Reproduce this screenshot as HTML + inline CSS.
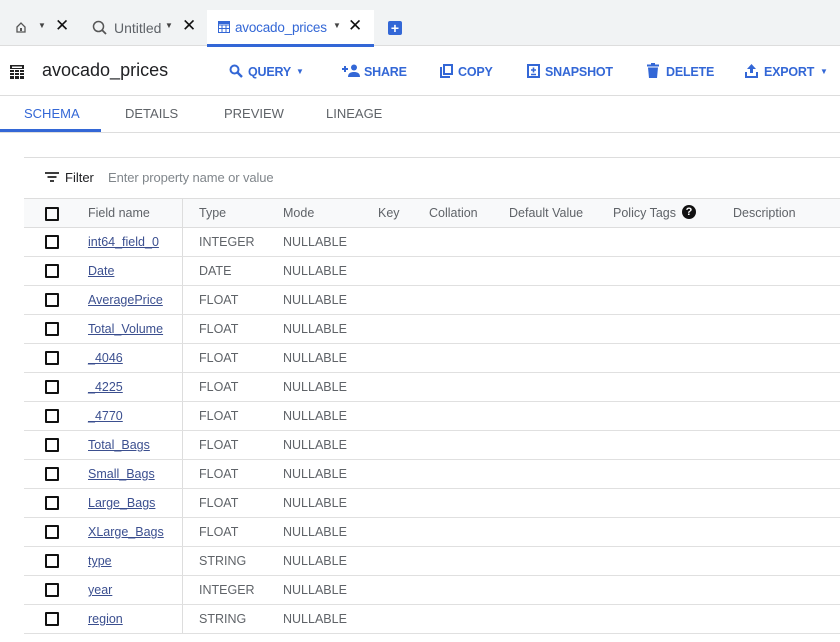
<!DOCTYPE html><html><head><style>
*{box-sizing:border-box;margin:0;padding:0}
body{width:840px;height:642px;overflow:hidden;background:#fff;font-family:"Liberation Sans",Arial,sans-serif;color:#3c4043;position:relative}
.a{position:absolute;white-space:nowrap}
.tb{position:absolute;left:0;top:0;width:840px;height:46px;background:#f1f3f4;border-bottom:1px solid #ddd}
.blue{color:#3367d6}
.btn{font-size:12.5px;font-weight:bold;color:#3367d6;top:65px;letter-spacing:-0.2px}
.tab{font-size:13px;top:106px;color:#5f6368}
.cb{position:absolute;left:45px;width:14px;height:14px;border:2px solid #111;border-radius:1px}
.row{position:absolute;left:24px;width:816px;height:29px;border-bottom:1px solid #e0e0e0;font-size:12.5px;color:#5f6368}
.row span{position:absolute;top:7px}
.fn{left:64px;color:#3b4f8f!important;text-decoration:underline;text-decoration-color:#3b4f8f}
</style></head><body>
<div class="tb"></div>
<div class="a" style="left:207px;top:10px;width:167px;height:37px;background:#fff;border-bottom:3px solid #3367d6"></div>
<svg class="a" style="left:15px;top:21px" width="12" height="12" viewBox="0 0 12 12"><path d="M2 6 L6 2 L10 6 V11 H2Z" fill="none" stroke="#555" stroke-width="1.3"/><rect x="5" y="7" width="2" height="3" fill="#555"/></svg>
<div class="a" style="left:38px;top:21px;font-size:8px;color:#444">▼</div>
<div class="a" style="left:55px;top:16px;font-size:17px;color:#111">✕</div>
<svg class="a" style="left:92px;top:20px" width="15" height="15" viewBox="0 0 15 15"><circle cx="6.5" cy="6.5" r="5" fill="none" stroke="#555" stroke-width="1.5"/><path d="M10 10 L14 14" stroke="#555" stroke-width="1.8"/></svg>
<div class="a" style="left:114px;top:20px;font-size:14px;color:#5f6368">Untitled</div>
<div class="a" style="left:165px;top:21px;font-size:8px;color:#444">▼</div>
<div class="a" style="left:182px;top:16px;font-size:17px;color:#111">✕</div>
<svg class="a" style="left:218px;top:21px" width="12" height="12" viewBox="0 0 12 12"><rect x="0.5" y="0.5" width="11" height="11" fill="none" stroke="#3367d6"/><path d="M0 4H12M0 7.5H12M4 4V12M8 4V12" stroke="#3367d6"/><rect x="0" y="0" width="12" height="3" fill="#3367d6"/></svg>
<div class="a blue" style="left:235px;top:20px;font-size:13.5px;letter-spacing:-0.2px">avocado_prices</div>
<div class="a" style="left:333px;top:21px;font-size:8px;color:#444">▼</div>
<div class="a" style="left:348px;top:16px;font-size:17px;color:#111">✕</div>
<div class="a" style="left:388px;top:21px;width:14px;height:14px;background:#3367d6;border-radius:2px;color:#fff;font-size:14px;line-height:14px;text-align:center;font-weight:bold">+</div>
<svg class="a" style="left:10px;top:65px" width="14" height="14" viewBox="0 0 14 14"><rect width="14" height="14" fill="#222"/><path d="M0 4.5H14M0 7.5H14M0 10.5H14M4.5 4.5V14M9.5 4.5V14" stroke="#fff" stroke-width="1"/><rect x="2" y="1.5" width="10" height="1.5" fill="#fff"/></svg>
<div class="a" style="left:42px;top:60px;font-size:18px;color:#202124">avocado_prices</div>
<svg class="a" style="left:229px;top:64px" width="14" height="14" viewBox="0 0 14 14"><circle cx="5.5" cy="5.5" r="4" fill="none" stroke="#3367d6" stroke-width="2"/><path d="M8.5 8.5L13 13" stroke="#3367d6" stroke-width="2.4"/></svg>
<div class="a btn" style="left:248px">QUERY</div><div class="a" style="left:296px;top:67px;font-size:8px;color:#3367d6">▼</div>
<svg class="a" style="left:342px;top:64px" width="18" height="13" viewBox="0 0 18 13"><path d="M3 2V8M0 5H6" stroke="#3367d6" stroke-width="2"/><circle cx="12" cy="3.5" r="3" fill="#3367d6"/><path d="M6 13C6 9 9 8 12 8C15 8 18 9 18 13Z" fill="#3367d6"/></svg>
<div class="a btn" style="left:364px">SHARE</div>
<svg class="a" style="left:440px;top:64px" width="13" height="14" viewBox="0 0 13 14"><path d="M1 3V13H10" fill="none" stroke="#3367d6" stroke-width="2"/><rect x="4" y="1" width="8" height="9" fill="none" stroke="#3367d6" stroke-width="2"/></svg>
<div class="a btn" style="left:458px">COPY</div>
<svg class="a" style="left:527px;top:64px" width="13" height="14" viewBox="0 0 13 14"><rect x="1" y="1" width="11" height="12" fill="none" stroke="#3367d6" stroke-width="2"/><path d="M6.5 3.5V8.5M4 6H9M4 10.5H9" stroke="#3367d6" stroke-width="1.6"/></svg>
<div class="a btn" style="left:545px">SNAPSHOT</div>
<svg class="a" style="left:647px;top:63px" width="12" height="15" viewBox="0 0 12 15"><rect x="0" y="1.5" width="12" height="2" fill="#3367d6"/><rect x="4" y="0" width="4" height="2" fill="#3367d6"/><path d="M1 4.5H11L10 15H2Z" fill="#3367d6"/></svg>
<div class="a btn" style="left:666px">DELETE</div>
<svg class="a" style="left:745px;top:64px" width="13" height="14" viewBox="0 0 13 14"><path d="M6.5 0L11 5H8V9H5V5H2Z" fill="#3367d6"/><path d="M1 8V13H12V8" fill="none" stroke="#3367d6" stroke-width="2"/></svg>
<div class="a btn" style="left:764px">EXPORT</div><div class="a" style="left:820px;top:67px;font-size:8px;color:#3367d6">▼</div>
<div class="a" style="left:0;top:95px;width:840px;height:1px;background:#ddd"></div>
<div class="a tab" style="left:24px;color:#3367d6">SCHEMA</div>
<div class="a tab" style="left:125px">DETAILS</div>
<div class="a tab" style="left:224px">PREVIEW</div>
<div class="a tab" style="left:326px">LINEAGE</div>
<div class="a" style="left:0;top:129px;width:101px;height:3px;background:#3367d6"></div>
<div class="a" style="left:0;top:132px;width:840px;height:1px;background:#ddd"></div>
<div class="a" style="left:24px;top:157px;width:816px;height:1px;background:#ddd"></div>
<svg class="a" style="left:45px;top:172px" width="14" height="10" viewBox="0 0 14 10"><path d="M0 1H14M2.5 5H11.5M5 9H9" stroke="#222" stroke-width="1.8"/></svg>
<div class="a" style="left:65px;top:170px;font-size:13px;color:#202124;font-weight:500">Filter</div>
<div class="a" style="left:108px;top:170px;font-size:13px;color:#80868b;letter-spacing:-0.1px">Enter property name or value</div>
<div class="a" style="left:24px;top:198px;width:816px;height:30px;background:#f8f9fa;border-top:1px solid #ddd;border-bottom:1px solid #ddd;font-size:12.5px;color:#5f6368">
<div class="cb" style="left:21px;top:8px"></div>
<span class="a" style="left:64px;top:7px">Field name</span>
<span class="a" style="left:175px;top:7px">Type</span>
<span class="a" style="left:259px;top:7px">Mode</span>
<span class="a" style="left:354px;top:7px">Key</span>
<span class="a" style="left:405px;top:7px">Collation</span>
<span class="a" style="left:485px;top:7px">Default Value</span>
<span class="a" style="left:589px;top:7px">Policy Tags</span>
<span class="a" style="left:658px;top:6px;width:14px;height:14px;border-radius:50%;background:#111;color:#fff;font-size:11px;font-weight:bold;text-align:center;line-height:14px">?</span>
<span class="a" style="left:709px;top:7px">Description</span>
</div>
<div class="a" style="left:182px;top:199px;width:1px;height:435px;background:#ddd"></div>
<div class="row" style="top:228px"><div class="cb" style="left:21px;top:7px"></div><span class="fn">int64_field_0</span><span style="left:175px">INTEGER</span><span style="left:259px">NULLABLE</span></div>
<div class="row" style="top:257px"><div class="cb" style="left:21px;top:7px"></div><span class="fn">Date</span><span style="left:175px">DATE</span><span style="left:259px">NULLABLE</span></div>
<div class="row" style="top:286px"><div class="cb" style="left:21px;top:7px"></div><span class="fn">AveragePrice</span><span style="left:175px">FLOAT</span><span style="left:259px">NULLABLE</span></div>
<div class="row" style="top:315px"><div class="cb" style="left:21px;top:7px"></div><span class="fn">Total_Volume</span><span style="left:175px">FLOAT</span><span style="left:259px">NULLABLE</span></div>
<div class="row" style="top:344px"><div class="cb" style="left:21px;top:7px"></div><span class="fn">_4046</span><span style="left:175px">FLOAT</span><span style="left:259px">NULLABLE</span></div>
<div class="row" style="top:373px"><div class="cb" style="left:21px;top:7px"></div><span class="fn">_4225</span><span style="left:175px">FLOAT</span><span style="left:259px">NULLABLE</span></div>
<div class="row" style="top:402px"><div class="cb" style="left:21px;top:7px"></div><span class="fn">_4770</span><span style="left:175px">FLOAT</span><span style="left:259px">NULLABLE</span></div>
<div class="row" style="top:431px"><div class="cb" style="left:21px;top:7px"></div><span class="fn">Total_Bags</span><span style="left:175px">FLOAT</span><span style="left:259px">NULLABLE</span></div>
<div class="row" style="top:460px"><div class="cb" style="left:21px;top:7px"></div><span class="fn">Small_Bags</span><span style="left:175px">FLOAT</span><span style="left:259px">NULLABLE</span></div>
<div class="row" style="top:489px"><div class="cb" style="left:21px;top:7px"></div><span class="fn">Large_Bags</span><span style="left:175px">FLOAT</span><span style="left:259px">NULLABLE</span></div>
<div class="row" style="top:518px"><div class="cb" style="left:21px;top:7px"></div><span class="fn">XLarge_Bags</span><span style="left:175px">FLOAT</span><span style="left:259px">NULLABLE</span></div>
<div class="row" style="top:547px"><div class="cb" style="left:21px;top:7px"></div><span class="fn">type</span><span style="left:175px">STRING</span><span style="left:259px">NULLABLE</span></div>
<div class="row" style="top:576px"><div class="cb" style="left:21px;top:7px"></div><span class="fn">year</span><span style="left:175px">INTEGER</span><span style="left:259px">NULLABLE</span></div>
<div class="row" style="top:605px"><div class="cb" style="left:21px;top:7px"></div><span class="fn">region</span><span style="left:175px">STRING</span><span style="left:259px">NULLABLE</span></div>
</body></html>
